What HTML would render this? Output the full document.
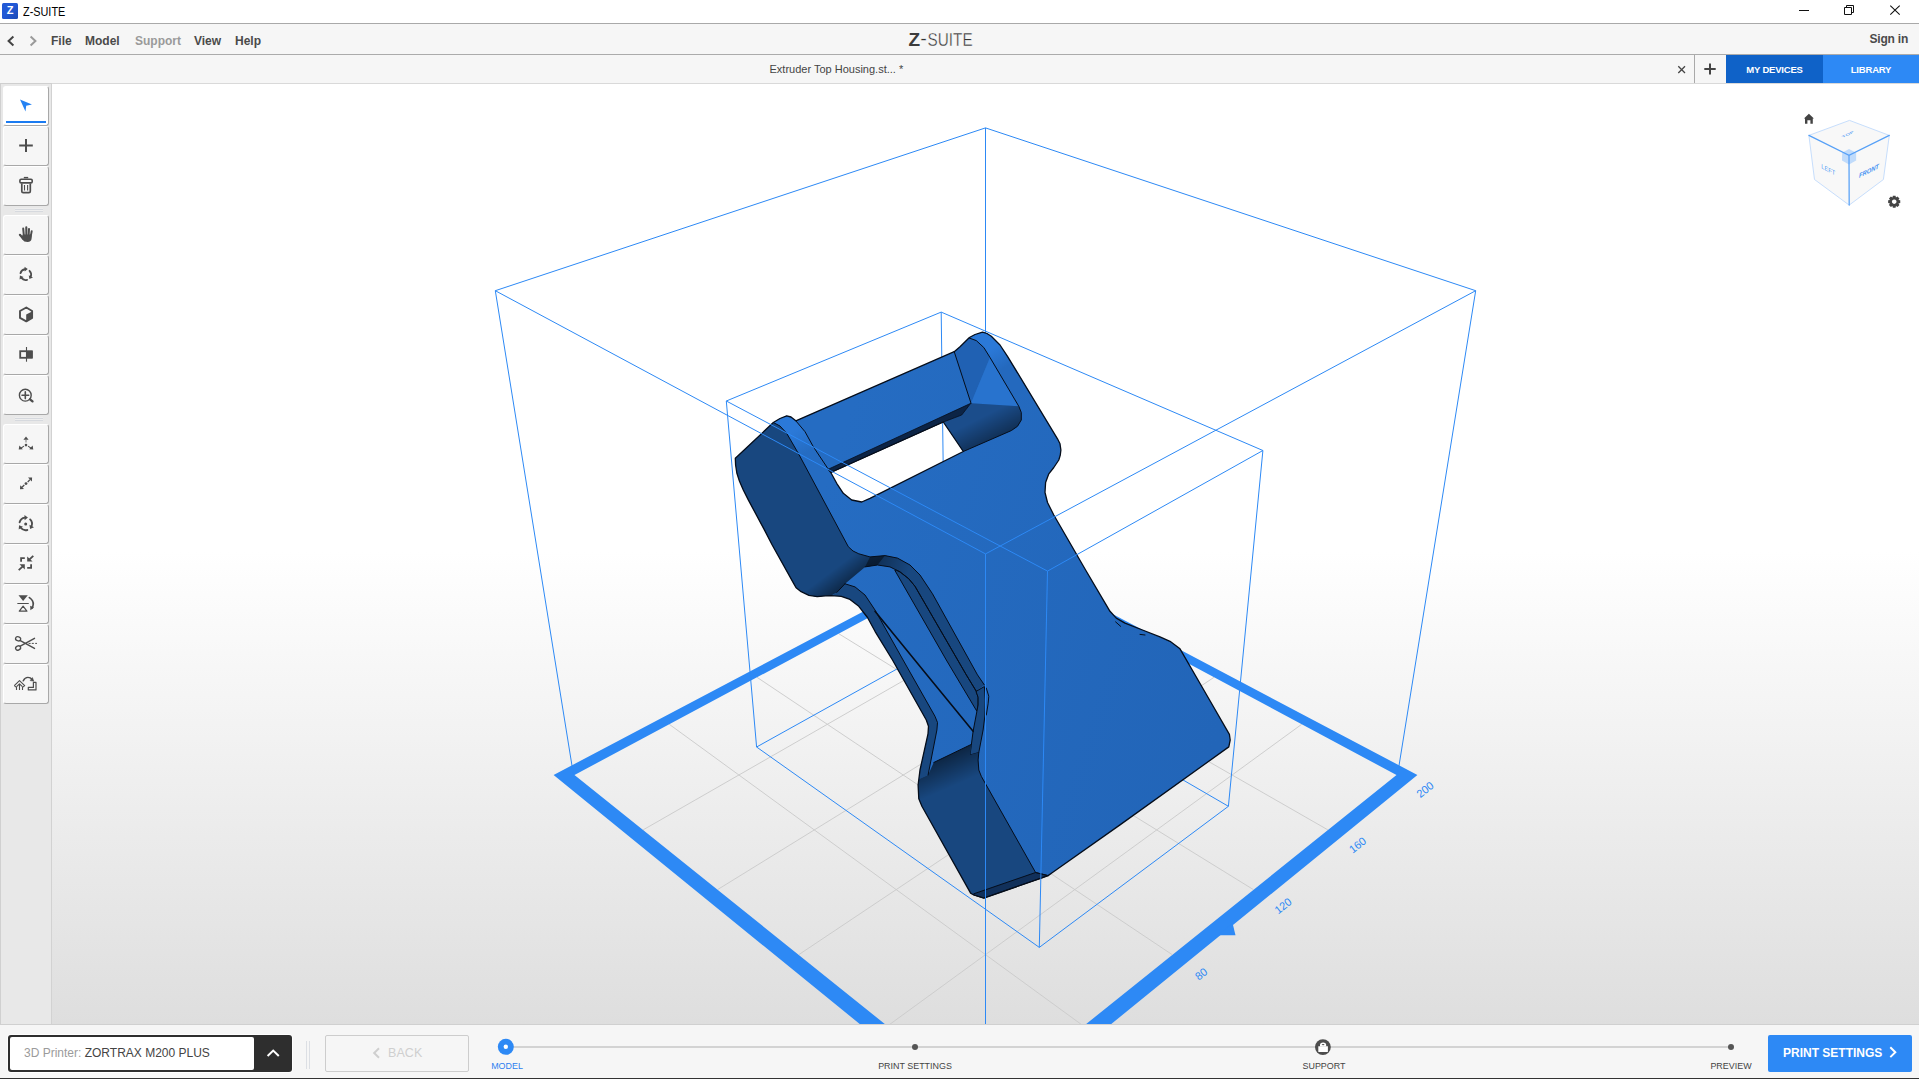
<!DOCTYPE html>
<html lang="en">
<head>
<meta charset="utf-8">
<title>Z-SUITE</title>
<style>
*{box-sizing:border-box;margin:0;padding:0}
html,body{width:1919px;height:1079px;overflow:hidden;background:#fff;font-family:"Liberation Sans",Arial,sans-serif;color:#444}
.abs{position:absolute}
#titlebar{position:absolute;left:0;top:0;width:1919px;height:24px;background:#fff;border-bottom:1px solid #a9a9a9}
#titlebar .ico{position:absolute;left:2px;top:3px;width:16px;height:16px;background:linear-gradient(135deg,#2259d6 0,#2259d6 45%,#1b49b4 100%);border-radius:1.5px;color:#fff;font-weight:bold;font-size:11px;line-height:15px;text-align:center}
#titlebar .ttl{position:absolute;left:23px;top:4.5px;font-size:12.5px;line-height:15px;color:#000;transform:scaleX(0.87);transform-origin:0 0}
#menubar{position:absolute;left:0;top:24px;width:1919px;height:31px;background:#f6f6f6;border-bottom:1px solid #ababab}
#menubar span{position:absolute;top:10px;font-size:12px;font-weight:bold;line-height:14px;color:#4a4a4a;white-space:nowrap}
#tabbar{position:absolute;left:0;top:55px;width:1919px;height:29px;background:#f6f6f6;border-bottom:1px solid #d9d9d9}
#tabbar .name{position:absolute;left:769.5px;top:7px;font-size:11px;line-height:14px;color:#444;white-space:nowrap}
#side{position:absolute;left:0;top:83px;width:52px;height:941px;background:#e8e8e8;border-top:1px solid #cfcfcf;border-right:1px solid #d2d2d2;border-left:1px solid #d0d0d0}
.tb{position:absolute;left:2px;width:46px;height:40px;background:#f6f6f6;border-radius:3px;border-right:1px solid #a8a8a8;border-bottom:1px solid #a8a8a8;border-top:1px solid #fff;border-left:1px solid #fff}
.tb.sel{background:#fff}
.tb.sel:after{content:"";position:absolute;left:2px;top:34px;width:40px;height:2px;background:#1b7bf1}
.tb svg{position:absolute;left:0;top:0;width:44px;height:38px}
.sep{position:absolute;left:14px;width:28px;height:3px;background:#efefef;border-top:1px solid #d6d9de;border-bottom:1px solid #d6d9de;box-shadow:0 -1px 0 #ededed}
#view{position:absolute;left:52px;top:84px;width:1867px;height:940px;background:linear-gradient(to bottom,#fff 0,#fff 468px,#dedede 940px);overflow:hidden}
#bottom{position:absolute;left:0;top:1024px;width:1919px;height:55px;background:#f6f6f6;border-bottom:1px solid #333;box-shadow:inset 0 1px 0 #d0d0d0}

#bottom .prn{position:absolute;left:8px;top:11px;width:284px;height:37px;background:#2e2e2e;border-radius:3px;box-shadow:0 0 0 1px rgba(255,255,255,.85)}
#bottom .prn .in{position:absolute;left:2px;top:2px;width:244px;height:33px;background:#fff;border-radius:2px;font-size:12px;line-height:14px;white-space:nowrap;padding:9px 0 0 14px;color:#444}
#bottom .prn .in i{font-style:normal;color:#9b9b9b}
#bottom .vsep{position:absolute;left:306px;top:17px;width:4px;height:28px;border-left:1px solid #dcdfe4;border-right:1px solid #dcdfe4}
#bottom .back{position:absolute;left:325px;top:11px;width:144px;height:37px;border:1px solid #cdcdcd;border-radius:2px;color:#cfcfcf;font-size:12.5px;line-height:14px}
#bottom .back span{position:absolute;left:62px;top:10px;letter-spacing:0.1px}
#bottom .track{position:absolute;left:506px;top:22px;width:1225px;height:2px;background:#d3d3d3}
#bottom .lbl{position:absolute;top:35.5px;font-size:9.6px;line-height:11px;color:#444;white-space:nowrap;transform:translateX(-50%) scaleX(0.93)}
#bottom .dot{position:absolute;width:6px;height:6px;border-radius:3px;background:#555;top:20px}
#bottom .next{position:absolute;left:1768px;top:11px;width:144px;height:37px;background:#2d89f5;border-radius:2px;color:#fff;font-weight:bold;font-size:12px;line-height:14px}
#bottom .next span{position:absolute;left:15px;top:11px;white-space:nowrap}
#tabbar .tabx{position:absolute;left:1694px;top:0;width:1px;height:28px;background:#a9a9a9}
#tabbar .dev{position:absolute;left:1726px;top:0;width:97px;height:28px;background:#0f62c8;color:#fff;font-weight:bold;font-size:9.5px;letter-spacing:-0.2px;line-height:29px;text-align:center}
#tabbar .lib{position:absolute;left:1823px;top:0;width:96px;height:28px;background:#2d89f5;color:#fff;font-weight:bold;font-size:9.5px;letter-spacing:-0.2px;line-height:29px;text-align:center}
</style>
</head>
<body>
<div id="titlebar">
  <svg class="abs" style="left:1790px;top:0" width="120" height="23" viewBox="1790 0 120 23"><path d="M1799 10.5 H1809" stroke="#111" stroke-width="1"/><path d="M1844.5 7.5 H1851.5 V14.5 H1844.5 Z M1846.5 7.5 V5.5 H1853.5 V12.5 H1851.5" fill="none" stroke="#111" stroke-width="1"/><path d="M1890.3 5.6 L1899.7 14.6 M1899.7 5.6 L1890.3 14.6" stroke="#111" stroke-width="1.1"/></svg>
  <div class="ico">Z</div>
  <div class="ttl">Z-SUITE</div>
</div>
<div id="menubar">
  <svg class="abs" style="left:4px;top:9px" width="36" height="16" viewBox="4 33 36 16"><path d="M13.4 36.6 L8.6 41 L13.4 45.4" fill="none" stroke="#444" stroke-width="2"/><path d="M30.6 36.6 L35.4 41 L30.6 45.4" fill="none" stroke="#9a9a9a" stroke-width="2"/></svg>
  <svg class="abs" style="left:900px;top:3px" width="80" height="26" viewBox="900 27 80 26"><text x="908.6" y="45.8" font-size="19.2" font-weight="bold" fill="#3c3c3c" textLength="11.6" lengthAdjust="spacingAndGlyphs" font-family="Liberation Sans, Arial, sans-serif">Z</text><text x="920.3" y="45.3" font-size="19.2" fill="#333" stroke="#f6f6f6" stroke-width="0.3" textLength="6.6" lengthAdjust="spacingAndGlyphs" font-family="Liberation Sans, Arial, sans-serif">-</text><text x="927.6" y="45.8" font-size="19.2" fill="#333" stroke="#f6f6f6" stroke-width="0.4" textLength="45" lengthAdjust="spacingAndGlyphs" font-family="Liberation Sans, Arial, sans-serif">SUITE</text></svg>
  <span style="left:51px">File</span>
  <span style="left:85px">Model</span>
  <span style="left:135px;color:#9a9a9a">Support</span>
  <span style="left:194px">View</span>
  <span style="left:235px">Help</span>
  <span style="left:1869.5px;top:8px;letter-spacing:-0.2px">Sign in</span>
</div>
<div id="tabbar">
  <div class="name">Extruder Top Housing.st... *</div>
  <svg class="abs" style="left:1676px;top:9px" width="12" height="12" viewBox="0 0 12 12"><path d="M2.3 2.3 L9 9 M9 2.3 L2.3 9" stroke="#444" stroke-width="1.3" fill="none"/></svg>
  <div class="tabx"></div>
  <svg class="abs" style="left:1702px;top:6px" width="16" height="16" viewBox="0 0 16 16"><path d="M2.3 8 H13.7 M8 2.4 V13.6" stroke="#444" stroke-width="2" fill="none"/></svg>
  <div class="dev">MY DEVICES</div><div class="lib">LIBRARY</div>
</div>
<div id="view">
<!--SCENE-START-->
<svg class="abs" style="left:0;top:0" width="1867" height="940" viewBox="52 84 1867 940">
<path d="M914.6 593.0 L1327.9 829.9 M1056.4 593.0 L643.1 829.9 M838.6 633.6 L1253.4 889.6 M1132.4 633.6 L717.6 889.6 M757.0 677.3 L1172.1 954.6 M1214.0 677.3 L798.9 954.6 M669.3 724.3 L1083.2 1025.8 M1301.7 724.3 L887.8 1025.8" stroke="#cbcbcb" stroke-width="0.95" fill="none"/>
<path fill-rule="evenodd" fill="#2d89f5" d="M985.5 547.0 L1417.4 775.0 L985.5 1126.3 L553.6 775.0Z M985.5 555.0 L1396.5 775.0 L985.5 1104.8 L574.5 775.0Z"/>
<path fill="#2d89f5" d="M1232.5 923 L1235.5 935.3 L1218 935.3 Z"/>
<text x="1425.0" y="789.5" transform="rotate(-38 1425.0 789.5)" font-size="11" fill="#2d89f5" text-anchor="middle" dominant-baseline="central" font-family="Liberation Sans, Arial, sans-serif">200</text>
<text x="1357.5" y="845.0" transform="rotate(-38 1357.5 845.0)" font-size="11" fill="#2d89f5" text-anchor="middle" dominant-baseline="central" font-family="Liberation Sans, Arial, sans-serif">160</text>
<text x="1283.0" y="905.8" transform="rotate(-38 1283.0 905.8)" font-size="11" fill="#2d89f5" text-anchor="middle" dominant-baseline="central" font-family="Liberation Sans, Arial, sans-serif">120</text>
<text x="1201.0" y="973.8" transform="rotate(-38 1201.0 973.8)" font-size="11" fill="#2d89f5" text-anchor="middle" dominant-baseline="central" font-family="Liberation Sans, Arial, sans-serif">80</text>
<path d="M985.5 127.9 L495.3 290.7 M985.5 127.9 L1475.7 290.7 M985.5 127.9 L985.5 555.0 M495.3 290.7 L573.5 775.0 M1475.7 290.7 L1397.5 775.0 M941.2 312.1 L726.3 401.0 M941.2 312.1 L1262.9 450.5 M941.2 312.1 L945.5 642.0 M945.5 642.0 L756.6 747.0 M945.5 642.0 L1228.4 806.3 M756.6 747.0 L1039.3 947.4 M1228.4 806.3 L1039.3 947.4" stroke="#2d89f5" stroke-width="1" fill="none"/>
<defs>
<linearGradient id="gm" gradientUnits="userSpaceOnUse" x1="800" y1="560" x2="1230" y2="700"><stop offset="0" stop-color="#256cc2"/><stop offset="1" stop-color="#2265b8"/></linearGradient>
<linearGradient id="gr" gradientUnits="userSpaceOnUse" x1="985" y1="335" x2="1012" y2="378"><stop offset="0" stop-color="#2b79d8"/><stop offset="0.3" stop-color="#2b79d8"/><stop offset="0.75" stop-color="#2469be"/><stop offset="1" stop-color="#2469be"/></linearGradient>
<linearGradient id="gl" gradientUnits="userSpaceOnUse" x1="785" y1="418" x2="810" y2="462"><stop offset="0" stop-color="#2b79d8"/><stop offset="0.3" stop-color="#2b79d8"/><stop offset="0.8" stop-color="#256cc2"/><stop offset="1" stop-color="#256cc2"/></linearGradient>
<linearGradient id="gs1" gradientUnits="userSpaceOnUse" x1="857" y1="577" x2="845" y2="561"><stop offset="0" stop-color="#000" stop-opacity="0.42"/><stop offset="1" stop-color="#000" stop-opacity="0"/></linearGradient>
<linearGradient id="gs2" gradientUnits="userSpaceOnUse" x1="950" y1="752" x2="963" y2="782"><stop offset="0" stop-color="#000" stop-opacity="0.5"/><stop offset="1" stop-color="#000" stop-opacity="0"/></linearGradient>
<linearGradient id="gs3" gradientUnits="userSpaceOnUse" x1="1012" y1="432" x2="1000" y2="408"><stop offset="0" stop-color="#000" stop-opacity="0.4"/><stop offset="1" stop-color="#000" stop-opacity="0"/></linearGradient>
<linearGradient id="gs4" gradientUnits="userSpaceOnUse" x1="868" y1="560" x2="908" y2="574"><stop offset="0" stop-color="#000" stop-opacity="0.42"/><stop offset="1" stop-color="#000" stop-opacity="0"/></linearGradient>
</defs>
<g stroke-linejoin="round" stroke-linecap="round">
<path fill-rule="evenodd" fill="url(#gm)" stroke="none" d="M969.4 337.5 L975.0 334.5 L982.5 332.1 L987.0 333.5 L991.3 336.3 L1000.0 345.0 L1007.5 356.3 L1057.5 438.8 L1060.0 443.8 L1060.9 450.0 L1060.3 455.0 L1058.8 460.0 L1053.8 467.5 L1048.8 473.8 L1045.6 482.5 L1045.0 492.5 L1047.5 502.5 L1053.8 515.0 L1085.6 570.0 L1110.0 611.3 L1116.3 618.1 L1125.0 623.1 L1142.5 630.0 L1160.0 636.9 L1170.0 641.3 L1180.0 648.8 L1203.8 690.0 L1229.4 734.4 L1230.2 740.0 L1228.8 746.9 L1120.0 824.9 L1052.5 872.5 L1048.1 875.6 L1041.3 878.1 L983.8 898.1 L973.8 895.0 L970.6 893.1 L921.9 806.3 L918.8 798.8 L918.1 785.0 L920.0 770.0 L928.0 733.8 L928.5 726.3 L926.3 720.0 L892.5 660.0 L875.0 631.3 L867.5 617.5 L858.8 606.3 L850.0 599.4 L841.3 596.3 L831.3 595.6 L825.6 595.8 L817.2 596.7 L808.9 595.3 L801.1 591.7 L796.1 587.8 L793.9 583.9 L772.2 545.0 L764.4 529.9 L748.3 499.9 L743.3 490.0 L739.4 481.1 L736.9 473.3 L735.6 465.0 L735.3 458.3 L738.0 455.8 L773.3 422.5 L780.0 418.5 L786.7 415.8 L791.0 417.0 L795.8 420.8 L954.2 351.7 L960.0 346.7Z M830.8 472.5 L943.3 422.0 L963.3 451.5 L870.0 498.3 L861.7 502.0 L851.7 500.0 L843.3 493.3 L836.7 483.3Z"/>
<path d="M969.4 337.5 L975.0 334.5 L982.5 332.1 L987.0 333.5 L991.3 336.3 L1000.0 345.0 L1007.5 356.3 L1030.0 393.0 L1012.0 395.0 L990.0 357.5 L983.8 347.5 L976.3 340.6Z" fill="url(#gr)" stroke="none" stroke-width="0"/>
<path d="M773.3 422.5 L780.0 418.5 L786.7 415.8 L791.0 417.0 L795.8 420.8 L805.0 431.7 L813.3 446.7 L828.3 469.2 L815.0 484.0 L798.3 453.3 L786.7 433.3 L780.0 426.0Z" fill="url(#gl)" stroke="none" stroke-width="0"/>
<path d="M773.3 422.5 L780.0 426.0 L786.7 433.3 L798.3 453.3 L848.3 546.7 L853.0 551.0 L858.8 553.8 L870.0 556.9 L885.0 555.6 L897.5 558.1 L910.0 565.0 L920.0 575.0 L932.5 593.8 L977.5 674.9 L984.4 685.0 L976.3 691.3 L966.3 674.9 L915.0 586.3 L908.8 578.8 L900.0 571.9 L890.0 566.9 L877.5 565.0 L865.0 566.9 L845.0 583.8 L836.7 592.5 L831.3 595.6 L825.6 595.8 L817.2 596.7 L808.9 595.3 L801.1 591.7 L796.1 587.8 L793.9 583.9 L772.2 545.0 L764.4 529.9 L748.3 499.9 L743.3 490.0 L739.4 481.1 L736.9 473.3 L735.6 465.0 L735.3 458.3 L738.0 455.8Z" fill="#18477f" stroke="none" stroke-width="0"/>
<path d="M848.3 546.7 L853.0 551.0 L858.8 553.8 L870.0 556.9 L885.0 555.6 L877.5 565.0 L865.0 566.9 L845.0 583.8 L836.7 592.5 L831.3 595.6 L825.6 595.8 L817.2 596.7 L808.9 595.3 L801.1 591.7 L796.1 587.8 L793.9 583.9 L779.0 557.0Z" fill="url(#gs1)" stroke="none" stroke-width="0"/>
<path d="M865.0 566.9 L870.0 556.9 L885.0 555.6 L897.5 558.1 L910.0 565.0 L920.0 575.0 L915.0 586.3 L908.8 578.8 L900.0 571.9 L890.0 566.9 L877.5 565.0Z" fill="url(#gs4)" stroke="none" stroke-width="0"/>
<path d="M897.0 570.5 L900.0 571.9 L908.8 578.8 L915.0 586.3 L966.3 674.9 L976.3 691.3 L978.1 697.5 L978.1 705.0 L976.9 711.3 L946.3 660.0 L895.0 570.6Z" fill="#18477f" stroke="#050d1a" stroke-width="1.0"/>
<path d="M976.3 691.3 L984.4 686.5 L985.3 700.0 L985.0 715.0 L983.1 730.0 L978.8 752.5 L970.0 755.0 L973.1 731.3 L976.9 711.3 L978.1 705.0 L978.1 697.5Z" fill="#18477f" stroke="#050d1a" stroke-width="1.0"/>
<path d="M831.3 595.6 L836.7 592.5 L845.0 583.8 L855.0 586.9 L865.0 595.0 L875.0 610.0 L903.1 660.0 L935.0 716.3 L937.5 722.5 L936.9 730.0 L928.1 775.0 L919.2 779.0 L920.0 770.0 L928.0 733.8 L928.5 726.3 L926.3 720.0 L892.5 660.0 L875.0 631.3 L867.5 617.5 L858.8 606.3 L850.0 599.4 L841.3 596.3Z" fill="#18477f" stroke="none" stroke-width="0"/>
<path d="M933.8 762.5 L971.3 744.4 L970.0 755.0 L978.8 752.5 L978.1 760.0 L978.8 770.0 L981.3 776.3 L1035.6 872.5 L973.8 893.8 L970.6 893.1 L921.9 806.3 L918.8 798.8 L918.1 785.0 L919.2 779.0 L928.1 775.0Z" fill="#18477f" stroke="none" stroke-width="0"/>
<path d="M933.8 762.5 L971.3 744.4 L970.0 755.0 L978.8 752.5 L978.1 760.0 L978.8 770.0 L981.3 776.3 L1035.6 872.5 L973.8 893.8 L970.6 893.1 L921.9 806.3 L918.8 798.8 L918.1 785.0 L919.2 779.0 L928.1 775.0Z" fill="url(#gs2)" stroke="none" stroke-width="0"/>
<path d="M973.8 893.8 L1035.6 872.5 L1048.1 875.6 L1041.3 878.1 L983.8 898.1 L973.8 895.0Z" fill="#11305a" stroke="#050d1a" stroke-width="1.0"/>
<path d="M954.2 351.7 L960.0 346.7 L969.4 337.8 L976.3 340.6 L983.8 347.5 L990.0 357.5 L971.0 403.2Z" fill="#2061b3" stroke="none" stroke-width="0"/>
<path d="M990.0 357.5 L1018.8 406.3 L971.0 403.2Z" fill="#2873ce" stroke="none" stroke-width="0"/>
<path d="M971.0 403.2 L1018.8 406.3 L1021.3 412.5 L1021.3 420.0 L1017.5 426.3 L1011.3 430.6 L963.3 451.5 L943.3 422.0 L961.7 415.0Z" fill="#1b4d8b" stroke="none" stroke-width="0"/>
<path d="M971.0 403.2 L1018.8 406.3 L1021.3 412.5 L1021.3 420.0 L1017.5 426.3 L1011.3 430.6 L963.3 451.5 L943.3 422.0 L961.7 415.0Z" fill="url(#gs3)" stroke="none" stroke-width="0"/>
<path d="M828.3 469.2 L970.8 403.3 L961.7 415.0 L943.3 422.0 L830.8 472.5Z" fill="#0c2446" stroke="#050d1a" stroke-width="0.8"/>
<path d="M773.3 422.5 L780.0 426.0 L786.7 433.3 L798.3 453.3 L848.3 546.7 L853.0 551.0 L858.8 553.8 L870.0 556.9 L885.0 555.6 L897.5 558.1 L910.0 565.0 L920.0 575.0 L932.5 593.8 L977.5 674.9 L984.4 685.0" fill="none" stroke="#050d1a" stroke-width="1.0"/>
<path d="M976.3 691.3 L966.3 674.9 L915.0 586.3 L908.8 578.8 L900.0 571.9 L890.0 566.9 L877.5 565.0 L865.0 566.9" fill="none" stroke="#050d1a" stroke-width="1.0"/>
<path d="M845.0 583.8 L855.0 586.9 L865.0 595.0 L875.0 610.0 L903.1 660.0 L935.0 716.3 L937.5 722.5 L936.9 730.0 L928.1 775.0" fill="none" stroke="#050d1a" stroke-width="1.0"/>
<path d="M875.0 611.3 L927.0 674.9 L973.1 731.3" fill="none" stroke="#050d1a" stroke-width="1.6"/>
<path d="M933.8 762.5 L971.3 744.4" fill="none" stroke="#050d1a" stroke-width="1.0"/>
<path d="M978.8 752.5 L978.1 760.0 L978.8 770.0 L981.3 776.3 L1035.6 872.5 L1048.1 875.6" fill="none" stroke="#050d1a" stroke-width="1.0"/>
<path d="M986.3 688.1 L988.8 696.3 L988.1 703.8 L986.3 715.0" fill="none" stroke="#050d1a" stroke-width="1.0"/>
<path d="M969.4 338.1 L976.3 340.6 L983.8 347.5 L990.0 357.5 L1018.8 406.3 L1021.3 412.5 L1021.3 420.0 L1017.5 426.3 L1011.3 430.6 L963.3 451.5" fill="none" stroke="#050d1a" stroke-width="1.0"/>
<path d="M954.2 351.7 L971.0 403.2" fill="none" stroke="#050d1a" stroke-width="1.0"/>
<path d="M795.8 420.8 L805.0 431.7 L813.3 446.7 L828.3 469.2 L830.8 472.5" fill="none" stroke="#050d1a" stroke-width="1.0"/>
<path d="M1115.6 621.9 L1120.6 626.3" fill="none" stroke="#050d1a" stroke-width="1.0"/>
<path d="M1140.0 634.4 L1145.0 635.0" fill="none" stroke="#050d1a" stroke-width="1.0"/>
<path d="M836.7 592.5 L845.0 583.8" fill="none" stroke="#050d1a" stroke-width="1.0"/>
<path fill="none" stroke="#050d1a" stroke-width="1.3" d="M969.4 337.5 L975.0 334.5 L982.5 332.1 L987.0 333.5 L991.3 336.3 L1000.0 345.0 L1007.5 356.3 L1057.5 438.8 L1060.0 443.8 L1060.9 450.0 L1060.3 455.0 L1058.8 460.0 L1053.8 467.5 L1048.8 473.8 L1045.6 482.5 L1045.0 492.5 L1047.5 502.5 L1053.8 515.0 L1085.6 570.0 L1110.0 611.3 L1116.3 618.1 L1125.0 623.1 L1142.5 630.0 L1160.0 636.9 L1170.0 641.3 L1180.0 648.8 L1203.8 690.0 L1229.4 734.4 L1230.2 740.0 L1228.8 746.9 L1120.0 824.9 L1052.5 872.5 L1048.1 875.6 L1041.3 878.1 L983.8 898.1 L973.8 895.0 L970.6 893.1 L921.9 806.3 L918.8 798.8 L918.1 785.0 L920.0 770.0 L928.0 733.8 L928.5 726.3 L926.3 720.0 L892.5 660.0 L875.0 631.3 L867.5 617.5 L858.8 606.3 L850.0 599.4 L841.3 596.3 L831.3 595.6 L825.6 595.8 L817.2 596.7 L808.9 595.3 L801.1 591.7 L796.1 587.8 L793.9 583.9 L772.2 545.0 L764.4 529.9 L748.3 499.9 L743.3 490.0 L739.4 481.1 L736.9 473.3 L735.6 465.0 L735.3 458.3 L738.0 455.8 L773.3 422.5 L780.0 418.5 L786.7 415.8 L791.0 417.0 L795.8 420.8 L954.2 351.7 L960.0 346.7Z M830.8 472.5 L943.3 422.0 L963.3 451.5 L870.0 498.3 L861.7 502.0 L851.7 500.0 L843.3 493.3 L836.7 483.3Z"/>
</g>
<path d="M495.3 290.7 L985.5 553.9 M1475.7 290.7 L985.5 553.9 M985.5 553.9 L985.5 1104.0 M726.3 401.0 L1047.5 571.1 M1262.9 450.5 L1047.5 571.1 M1047.5 571.1 L1039.3 947.4 M726.3 401.0 L756.6 747.0 M1262.9 450.5 L1228.4 806.3" stroke="#2d89f5" stroke-width="1" fill="none"/>
<polygon points="1849.5,120.4 1889.3,135.4 1883.4,179.5 1849.2,205.1 1814.5,179.5 1808.9,135.4" fill="#f7f7f7" fill-opacity="0.92"/>
<path d="M1808.9 135.4 L1849.5 120.4 L1889.3 135.4 M1808.9 135.4 L1814.5 179.5 L1849.2 205.1 L1883.4 179.5 L1889.3 135.4" fill="none" stroke="#c7defc" stroke-width="1"/>
<polygon points="1842.2,152.8 1849.0,148.9 1856.1,152.8 1856.1,160.6 1849.0,164.4 1842.0,160.6" fill="#b9d7fb" fill-opacity="0.9"/>
<path d="M1808.9 135.4 L1849.0 155.3 L1889.3 135.4 M1849.0 155.3 L1849.2 205.1" fill="none" stroke="#56a0f7" stroke-width="1.25" stroke-linecap="round"/>
<text transform="matrix(0.896 0.445 0 1 1828.3 169.4)" font-size="6.5" text-anchor="middle" dominant-baseline="central" fill="#4a96f5" fill-opacity="0.95" font-family="Liberation Sans, Arial, sans-serif">LEFT</text>
<text transform="matrix(0.896 -0.445 0 1 1868.9 170.6)" font-size="6.5" font-weight="bold" font-style="italic" text-anchor="middle" dominant-baseline="central" fill="#3f90f3" font-family="Liberation Sans, Arial, sans-serif">FRONT</text>
<text transform="matrix(0.85 -0.42 0.55 0.27 1847.6 134.4)" font-size="6.5" text-anchor="middle" dominant-baseline="central" font-weight="bold" font-style="italic" fill="#4a96f5" fill-opacity="0.8" font-family="Liberation Sans, Arial, sans-serif">TOP</text>
<path d="M1808.9 113.8 L1813.9 118.6 H1812.8 V123.8 H1810.4 V120.2 H1807.4 V123.8 H1805 V118.6 H1803.9 Z" fill="#444"/>
<path d="M1900.25 200.35 L1900.25 203.05 L1898.45 203.45 L1898.45 203.47 L1899.44 205.02 L1897.52 206.94 L1895.97 205.95 L1895.95 205.95 L1895.55 207.75 L1892.85 207.75 L1892.45 205.95 L1892.43 205.95 L1890.88 206.94 L1888.96 205.02 L1889.95 203.47 L1889.95 203.45 L1888.15 203.05 L1888.15 200.35 L1889.95 199.95 L1889.95 199.93 L1888.96 198.38 L1890.88 196.46 L1892.43 197.45 L1892.45 197.45 L1892.85 195.65 L1895.55 195.65 L1895.95 197.45 L1895.97 197.45 L1897.52 196.46 L1899.44 198.38 L1898.45 199.93 L1898.45 199.95Z M1894.20 199.40 a2.3 2.3 0 1 0 0.01 0Z" fill="#444" fill-rule="evenodd"/>
</svg>
<!--SCENE-END-->
</div>
<div id="side">
<!--TOOLS-START-->
<div class="tb sel" style="top:2px"><svg viewBox="4 87 44 38" width="44" height="38"><path d="M20 99.6 L32 104.6 L26.2 105.8 L25.5 111.6 Z" fill="#2482f3"/></svg></div>
<div class="tb" style="top:42px"><svg viewBox="4 127 44 38" width="44" height="38"><path d="M19.2 145.5 H32.8 M26 139 V152" stroke="#4d4d4d" stroke-width="2" fill="none"/></svg></div>
<div class="tb" style="top:82px"><svg viewBox="4 167 44 38" width="44" height="38"><path d="M23.8 177.6 H28.2" stroke="#4d4d4d" stroke-width="1.4" fill="none"/><rect x="19.9" y="179.3" width="12.3" height="3.6" rx="1.2" fill="none" stroke="#4d4d4d" stroke-width="1.6"/><path d="M21.8 183.5 V191.3 Q21.8 192.7 23.2 192.7 H28.9 Q30.3 192.7 30.3 191.3 V183.5" fill="none" stroke="#4d4d4d" stroke-width="1.7"/><path d="M24.5 185 V190.6 M27.6 185 V190.6" stroke="#4d4d4d" stroke-width="1.1" fill="none"/></svg></div>
<div class="tb" style="top:131px"><svg viewBox="4 216 44 38" width="44" height="38"><g stroke="#4d4d4d" stroke-linecap="round" fill="none"><path d="M23.2 228.6 L23.9 236" stroke-width="2"/><path d="M26.3 227.4 L26.4 236" stroke-width="2.1"/><path d="M29 228.9 L28.6 236" stroke-width="2"/><path d="M31.7 231.2 L30.6 237" stroke-width="1.9"/><path d="M19.9 234.8 L23.5 239" stroke-width="2.2"/></g><path d="M22.9 234.5 H31.6 L31.6 238.5 Q31.4 241.9 27.5 241.9 Q23.8 241.9 22.4 239.4 L21.2 237.6 Z" fill="#4d4d4d"/></svg></div>
<div class="tb" style="top:171px"><svg viewBox="4 256 44 38" width="44" height="38"><path d="M20.48 273.20 A5.40 5.40 0 0 1 24.95 269.25" fill="none" stroke="#4d4d4d" stroke-width="1.8" stroke-linecap="round"/><path d="M27.76 269.12 L24.55 266.86 L24.72 271.61 Z" fill="#4d4d4d"/><path d="M29.52 270.78 A5.40 5.40 0 0 1 30.71 276.62" fill="none" stroke="#4d4d4d" stroke-width="1.8" stroke-linecap="round"/><path d="M29.41 279.12 L32.98 277.48 L28.78 275.25 Z" fill="#4d4d4d"/><path d="M27.10 279.82 A5.40 5.40 0 0 1 21.44 277.92" fill="none" stroke="#4d4d4d" stroke-width="1.8" stroke-linecap="round"/><path d="M19.93 275.55 L19.57 279.46 L23.60 276.95 Z" fill="#4d4d4d"/></svg></div>
<div class="tb" style="top:211px"><svg viewBox="4 296 44 38" width="44" height="38"><path d="M26.3 307.5 L32.1 311 V317.9 L26.3 321.4 L20 317.9 V311 Z" fill="none" stroke="#4d4d4d" stroke-width="1.9" stroke-linejoin="round"/><path d="M26.2 314.4 L32 311.6 V317.8 L26.2 321.2 Z" fill="#4d4d4d"/></svg></div>
<div class="tb" style="top:251px"><svg viewBox="4 336 44 38" width="44" height="38"><rect x="20.2" y="351.2" width="11.6" height="6.6" fill="none" stroke="#4d4d4d" stroke-width="1.8"/><rect x="26.2" y="351" width="6.5" height="7" fill="#4d4d4d"/><path d="M26.5 347 V361.7" stroke="#4d4d4d" stroke-width="1.1"/></svg></div>
<div class="tb" style="top:291px"><svg viewBox="4 376 44 38" width="44" height="38"><circle cx="25.3" cy="395.2" r="5.9" fill="none" stroke="#4d4d4d" stroke-width="1.4"/><path d="M22 395.2 H28.7 M25.3 391.9 V398.6" stroke="#4d4d4d" stroke-width="1.6" stroke-linecap="round"/><path d="M30 399.3 L32.5 401.4" stroke="#4d4d4d" stroke-width="2.3" stroke-linecap="round"/></svg></div>
<div class="tb" style="top:340px"><svg viewBox="4 425 44 38" width="44" height="38"><circle cx="26" cy="445.1" r="1.3" fill="#4d4d4d"/><path d="M26 436.6 L28.6 439.8 H23.4 Z" fill="#4d4d4d"/><path d="M26 440 V442.6" stroke="#9a9a9a" stroke-width="1.3"/><path d="M18.7 449.6 L19.4 445.6 L22.8 449.3 Z" fill="#4d4d4d"/><path d="M23.6 446.4 L20.8 448.2" stroke="#4d4d4d" stroke-width="1.1" stroke-linecap="round"/><path d="M33.3 449.6 L32.6 445.6 L29.2 449.3 Z" fill="#4d4d4d"/><path d="M28.4 446.4 L31.2 448.2" stroke="#4d4d4d" stroke-width="1.1" stroke-linecap="round"/></svg></div>
<div class="tb" style="top:380px"><svg viewBox="4 465 44 38" width="44" height="38"><circle cx="26" cy="483.6" r="1.4" fill="#4d4d4d"/><path d="M32.1 477.4 L31.9 481.6 L28 477.6 Z" fill="#4d4d4d"/><path d="M30 479.6 L27.7 482" stroke="#4d4d4d" stroke-width="1.3"/><path d="M20 489.3 L20.2 485.2 L24 489.1 Z" fill="#4d4d4d"/><path d="M22 487.3 L24.3 485" stroke="#4d4d4d" stroke-width="1.3"/></svg></div>
<div class="tb" style="top:420px"><svg viewBox="4 505 44 38" width="44" height="38"><path d="M19.61 522.27 A6.30 6.30 0 0 1 24.82 517.66" fill="none" stroke="#4d4d4d" stroke-width="1.9" stroke-linecap="round"/><path d="M27.91 517.52 L24.45 515.07 L24.63 520.20 Z" fill="#4d4d4d"/><path d="M30.15 519.45 A6.30 6.30 0 0 1 31.54 526.26" fill="none" stroke="#4d4d4d" stroke-width="1.9" stroke-linecap="round"/><path d="M30.12 529.00 L33.97 527.23 L29.44 524.82 Z" fill="#4d4d4d"/><path d="M27.33 529.99 A6.30 6.30 0 0 1 20.74 527.78" fill="none" stroke="#4d4d4d" stroke-width="1.9" stroke-linecap="round"/><path d="M19.07 525.18 L18.68 529.40 L23.03 526.68 Z" fill="#4d4d4d"/><circle cx="25.7" cy="523.9" r="1.5" fill="#4d4d4d"/></svg></div>
<div class="tb" style="top:460px"><svg viewBox="4 545 44 38" width="44" height="38"><path d="M21.1 561.8 V558.1 H24.8 M31.1 564.2 V567.9 H27.2" fill="none" stroke="#4d4d4d" stroke-width="1.8"/><path d="M27.2 556.6 V561.6 H32.6 Z M19.5 564.2 H24.8 V569.5 Z" fill="#4d4d4d"/><path d="M29 559.9 L33.3 555.8 M23.1 566.1 L18.7 570.2" stroke="#4d4d4d" stroke-width="1.8"/></svg></div>
<div class="tb" style="top:500px"><svg viewBox="4 585 44 38" width="44" height="38"><path d="M18.5 595.3 H27.8 L23.1 601.1 Z" fill="#4d4d4d"/><path d="M17.8 603.5 H28.3" stroke="#4d4d4d" stroke-width="1.2" stroke-linecap="round"/><path d="M23.1 606.2 L19.3 611.2 H26.9 Z" fill="none" stroke="#4d4d4d" stroke-width="1.2" stroke-linejoin="round"/><path d="M29.4 597.6 Q33.6 600.5 33.2 604.5 Q33 606.5 32 608" fill="none" stroke="#4d4d4d" stroke-width="1.7" stroke-linecap="round"/><path d="M30.2 605.8 L34 607.6 L30.4 610.2 Z" fill="#4d4d4d"/></svg></div>
<div class="tb" style="top:540px"><svg viewBox="4 625 44 38" width="44" height="38"><ellipse cx="18.1" cy="638.8" rx="2.6" ry="2" transform="rotate(20 18.1 638.8)" fill="none" stroke="#4d4d4d" stroke-width="1.3"/><ellipse cx="18.1" cy="648" rx="2.6" ry="2" transform="rotate(-25 18.1 648)" fill="none" stroke="#4d4d4d" stroke-width="1.3"/><path d="M20.3 640.6 L34.5 648.4 M20.3 646.2 L34.5 638.3" stroke="#4d4d4d" stroke-width="1.4" stroke-linecap="round"/><path d="M28.6 643.4 H30.6 M31.8 643.4 H33.8 M35.2 643.4 H37" stroke="#4d4d4d" stroke-width="1"/></svg></div>
<div class="tb" style="top:580px"><svg viewBox="4 665 44 38" width="44" height="38"><path d="M14.3 685.6 L19.5 680.6 L24.7 685.6 L22.5 687.4 V690 M16.5 690 V687.4 L14.3 685.6 M19.5 690 V683.8 M16.6 686.6 L19.5 683.8 L22.4 686.6" fill="none" stroke="#4d4d4d" stroke-width="1.1" stroke-linejoin="round"/><path d="M23.2 680.8 Q25 677.4 27.9 677.4 Q30.6 677.4 32 679.4" fill="none" stroke="#4d4d4d" stroke-width="1.4" stroke-linecap="round"/><path d="M32.4 677.6 L33.8 681.2 L30.2 680.6 Z" fill="#4d4d4d" stroke="#4d4d4d" stroke-width="0.6" stroke-linejoin="round"/><path d="M33.4 682.4 H36 V689.9 H28.3 V687.4 H33.4 Z" fill="none" stroke="#4d4d4d" stroke-width="1.2" stroke-linejoin="round"/></svg></div>
<div class="sep" style="top:125px"></div>
<div class="sep" style="top:334px"></div>
<!--TOOLS-END-->
</div>
<div id="bottom">
<!--BOTTOM-START-->
<div class="prn"><div class="in"><i>3D Printer:</i> ZORTRAX M200 PLUS</div>
<svg class="abs" style="left:246px;top:0" width="38" height="37" viewBox="0 0 38 37"><path d="M13.6 21 L19.2 15.6 L24.8 21" fill="none" stroke="#fff" stroke-width="2"/></svg></div>
<div class="vsep"></div>
<div class="back"><svg class="abs" style="left:44px;top:10px" width="12" height="14" viewBox="0 0 12 14"><path d="M9 2.3 L4.2 7 L9 11.7" fill="none" stroke="#cfcfcf" stroke-width="2"/></svg><span>BACK</span></div>
<div class="track"></div>
<svg class="abs" style="left:496px;top:13px" width="20" height="20" viewBox="0 0 20 20"><circle cx="9.8" cy="9.8" r="8" fill="#2d89f5"/><circle cx="9.8" cy="9.8" r="2.2" fill="#fff"/></svg>
<div class="lbl" style="left:507px;color:#2d7ff0">MODEL</div>
<div class="dot" style="left:912px"></div>
<div class="lbl" style="left:915px">PRINT SETTINGS</div>
<svg class="abs" style="left:1313px;top:13px" width="20" height="20" viewBox="0 0 20 20"><circle cx="9.9" cy="10.1" r="7.9" fill="#4d4d4d"/><path d="M5.3 9.2 H14.9 V14.4 Q14.9 14.9 14.4 14.9 H5.8 Q5.3 14.9 5.3 14.4 Z" fill="#fff"/><path d="M7 9.4 V8 Q7 5.4 10.1 5.4 Q13.2 5.4 13.2 8 V9.4 Z" fill="#fff"/><ellipse cx="10.1" cy="7.6" rx="1.4" ry="0.6" fill="#4d4d4d"/></svg>
<div class="lbl" style="left:1323.5px">SUPPORT</div>
<div class="dot" style="left:1728px"></div>
<div class="lbl" style="left:1731px">PREVIEW</div>
<div class="next"><span>PRINT SETTINGS</span><svg class="abs" style="left:118px;top:10px" width="14" height="16" viewBox="0 0 14 16"><path d="M4.3 2.3 L9.3 7.2 L4.3 12.1" fill="none" stroke="#fff" stroke-width="2"/></svg></div>
<!--BOTTOM-END-->
</div>
</body>
</html>
